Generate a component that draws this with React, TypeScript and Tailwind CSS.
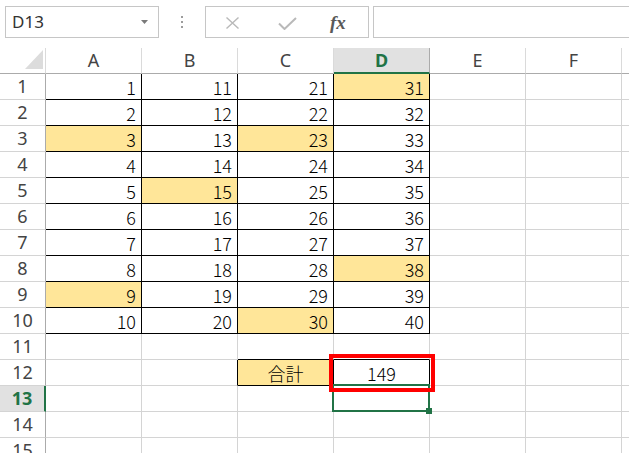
import React from "react";

const FILL = "bg-[#ffe699]";
const cols = ["A", "B", "C", "D", "E", "F", ""];
const hl: Record<string, boolean> = { A3: true, A9: true, B5: true, C3: true, C10: true, D1: true, D8: true };

function cellInfo(c: number, r: number) {
  let text: React.ReactNode = "";
  let fill = false;
  let rb = false;
  let bb = false;
  let center = false;
  if (r >= 1 && r <= 10 && c <= 3) {
    text = String(c * 10 + r);
    fill = !!hl[cols[c] + r];
    rb = true;
    bb = true;
  }
  if (r === 11 && (c === 2 || c === 3)) bb = true;
  if (r === 12) {
    if (c === 1) rb = true;
    if (c === 2) {
      text = "合計";
      fill = true;
      rb = true;
      bb = true;
      center = true;
    }
    if (c === 3) {
      text = "149";
      rb = true;
      bb = true;
      center = true;
    }
  }
  return { text, fill, rb, bb, center };
}

function Cell({ c, r }: { c: number; r: number }) {
  const { text, fill, rb, bb, center } = cellInfo(c, r);
  const cls = [
    "w-[96px] shrink-0 h-full border-r border-b flex items-end pb-[1px] text-[18px] leading-[22px] font-light text-black",
    rb ? "border-r-black" : "border-r-[#d4d4d4]",
    bb ? "border-b-black" : "border-b-[#d4d4d4]",
    fill ? FILL : "bg-white",
    center ? "justify-center" : "justify-end pr-[5px]",
  ].join(" ");
  return <div className={cls}>{text}</div>;
}

function Row({ r }: { r: number }) {
  const sel = r === 13;
  return (
    <div className="flex h-[26px] shrink-0">
      <div
        className={
          sel
            ? "w-[46px] shrink-0 h-full border-b border-b-[#d4d4d4] border-r-2 border-r-[#217346] bg-[#e1e1e1] flex items-center justify-center text-[18px] font-bold text-[#217346]"
            : "w-[46px] shrink-0 h-full border-b border-b-[#d4d4d4] border-r border-r-[#ababab] bg-white flex items-center justify-center text-[18px] text-[#444444]"
        }
        style={{ fontFamily: '"Noto Sans", "DejaVu Sans", sans-serif' }}
      >
        {r}
      </div>
      {cols.map((_, c) => (
        <Cell key={c} c={c} r={r} />
      ))}
    </div>
  );
}

export default function App() {
  const rows = Array.from({ length: 15 }, (_, i) => i + 1);
  return (
    <div
      className="relative w-[629px] h-[453px] overflow-hidden bg-white"
      style={{ fontFamily: '"Noto Sans CJK JP", "Noto Sans", sans-serif' }}
    >
      {/* formula bar */}
      <div className="flex items-start h-[48px] pt-[6px] pl-[5px]" style={{ fontFamily: '"Noto Sans", "DejaVu Sans", sans-serif' }}>
        <div className="w-[154px] h-[32px] shrink-0 border border-[#c6c6c6] flex items-center justify-between pl-[6px] pr-[10px]">
          <span className="text-[17px] text-[#333333]">D13</span>
          <svg width="7" height="4" viewBox="0 0 7 4">
            <path d="M0 0 L7 0 L3.5 4 Z" fill="#7a7a7a" />
          </svg>
        </div>
        <div className="w-[46px] h-[32px] shrink-0 flex flex-col items-center justify-center gap-[3px]">
          <div className="w-[2px] h-[2px] bg-[#9c9c9c]" />
          <div className="w-[2px] h-[2px] bg-[#9c9c9c]" />
          <div className="w-[2px] h-[2px] bg-[#9c9c9c]" />
        </div>
        <div className="w-[164px] h-[32px] shrink-0 border border-[#c6c6c6] relative">
          <svg className="absolute left-[18px] top-[10px]" width="17" height="12" viewBox="0 0 17 12">
            <path d="M2.5 0.5 L14.5 11.5 M14.5 0.5 L2.5 11.5" stroke="#b9b9b9" strokeWidth="1.4" fill="none" />
          </svg>
          <svg className="absolute left-[72px] top-[10px]" width="19" height="13" viewBox="0 0 19 13">
            <path d="M1 6.5 L6.5 12 L18 1" stroke="#b9b9b9" strokeWidth="2" fill="none" />
          </svg>
          <span
            className="absolute left-[124px] top-[2px] text-[19px] italic font-bold text-[#595959]"
            style={{ fontFamily: '"Liberation Serif", "DejaVu Serif", serif' }}
          >
            fx
          </span>
        </div>
        <div className="ml-[4px] flex-1 h-[32px] border border-r-0 border-[#c6c6c6]" />
      </div>

      {/* column headers */}
      <div className="flex h-[26px]" style={{ fontFamily: '"Noto Sans", "DejaVu Sans", sans-serif' }}>
        <div className="relative w-[46px] shrink-0 h-full border-b border-b-[#ababab] border-r border-r-[#dadada]">
          <svg className="absolute left-[25px] top-[2px]" width="19" height="20" viewBox="0 0 19 20">
            <path d="M18 0 L18 19 L0 19 Z" fill="#dcdcdc" />
          </svg>
        </div>
        {cols.map((c, i) =>
          i === 3 ? (
            <div
              key={i}
              className="w-[96px] shrink-0 h-full border-r border-r-[#ababab] border-b-2 border-b-[#217346] bg-[#e1e1e1] flex items-center justify-center text-[18px] font-bold text-[#217346]"
            >
              {c}
            </div>
          ) : (
            <div
              key={i}
              className="w-[96px] shrink-0 h-full border-r border-r-[#dadada] border-b border-b-[#ababab] bg-white flex items-center justify-center text-[18px] text-[#444444]"
            >
              {c}
            </div>
          )
        )}
      </div>

      {rows.map((r) => (
        <Row key={r} r={r} />
      ))}

      {/* selection */}
      <div className="absolute left-[332px] top-[384px] w-[98px] h-[28px] border-2 border-[#217346]" />
      <div className="absolute left-[426px] top-[408px] w-[6px] h-[6px] bg-[#217346]" />
      {/* red highlight */}
      <div className="absolute left-[329px] top-[354px] w-[106px] h-[38px] border-4 border-[#ff0000]" />
    </div>
  );
}
